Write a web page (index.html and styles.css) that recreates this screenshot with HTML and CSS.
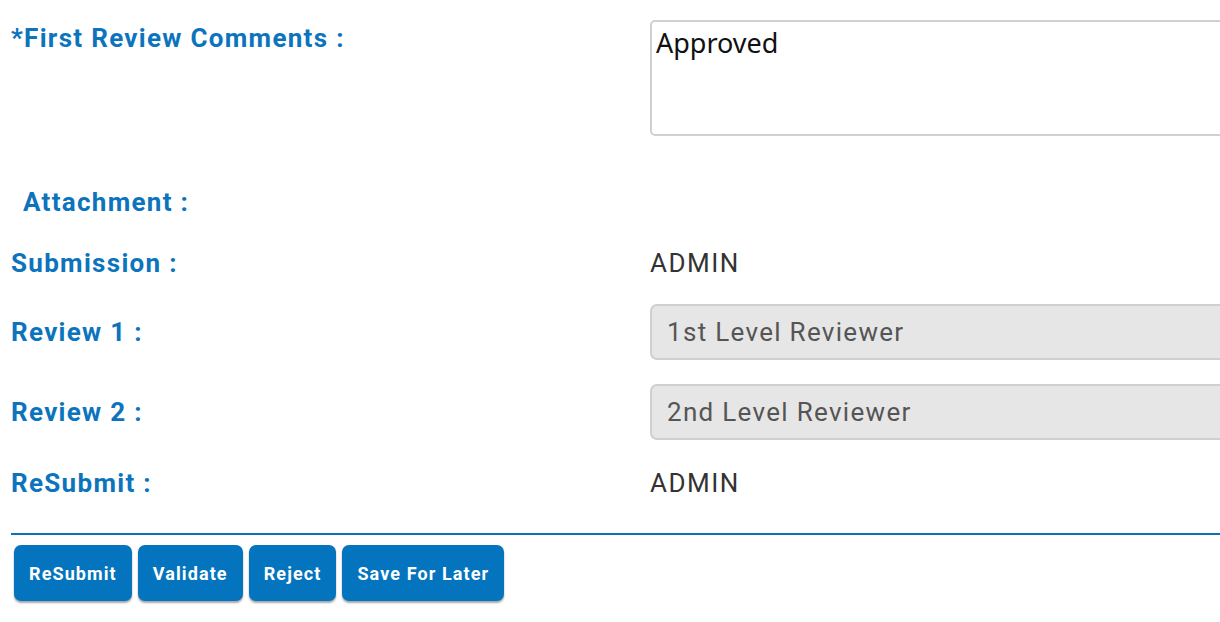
FILE: index.html
```html
<!DOCTYPE html>
<html>
<head>
<meta charset="utf-8">
<link rel="stylesheet" href="styles.css">
</head>
<body>
<div class="form">
  <div class="row row-comments">
    <div class="label label-top">*First Review Comments :</div>
    <div class="value"><div class="textarea">Approved</div></div>
  </div>
  <div class="row row-attach">
    <div class="label label-indent">Attachment :</div>
    <div class="value"></div>
  </div>
  <div class="row row-sub">
    <div class="label">Submission :</div>
    <div class="value"><span class="plain">ADMIN</span></div>
  </div>
  <div class="row row-rev1">
    <div class="label">Review 1 :</div>
    <div class="value"><div class="input">1st Level Reviewer</div></div>
  </div>
  <div class="row row-rev2">
    <div class="label">Review 2 :</div>
    <div class="value"><div class="input">2nd Level Reviewer</div></div>
  </div>
  <div class="row row-resub">
    <div class="label">ReSubmit :</div>
    <div class="value"><span class="plain">ADMIN</span></div>
  </div>
  <div class="divider"></div>
  <div class="actions">
    <button class="btn btn-resubmit">ReSubmit</button>
    <button class="btn btn-validate">Validate</button>
    <button class="btn btn-reject">Reject</button>
    <button class="btn btn-save">Save For Later</button>
  </div>
</div>
</body>
</html>
```
FILE: styles.css
```css
html, body {
  margin: 0;
  padding: 0;
  background: #ffffff;
  overflow: hidden;
}
body {
  width: 1220px;
  height: 622px;
  font-family: Roboto, "Liberation Sans", sans-serif;
}
.form {
  padding: 20px 0 0 11px;
}
.row {
  display: flex;
  align-items: center;
  height: 56px;
}
.label {
  width: 639px;
  flex: none;
  color: #0b74bd;
  font-weight: 700;
  font-size: 26px;
  letter-spacing: 1.3px;
  line-height: 30px;
}
.label-top {
  align-self: flex-start;
  padding-top: 3px;
}
.label-indent {
  padding-left: 12px;
}
.value {
  flex: 1;
  display: flex;
  align-items: center;
}
.row-comments {
  height: 116px;
  align-items: flex-start;
}
.row-attach { margin-top: 38px; }
.row-sub { margin-top: 5px; }
.row-rev1 { margin-top: 13px; height: 56px; }
.row-rev2 { margin-top: 24px; height: 56px; }
.row-resub { margin-top: 15px; }
.textarea {
  box-sizing: border-box;
  width: 700px;
  height: 116px;
  border: 2px solid #d0d0d0;
  border-radius: 5px;
  padding: 3px 4px;
  font-family: "Noto Sans", "Open Sans", sans-serif;
  font-size: 27px;
  line-height: 36px;
  color: #111;
}
.input {
  box-sizing: border-box;
  width: 700px;
  height: 56px;
  background: #e6e6e6;
  border: 2px solid #cfcfcf;
  border-radius: 7px;
  padding: 0 15px;
  display: flex;
  align-items: center;
  font-size: 26px;
  letter-spacing: 1.3px;
  color: #555;
}
.plain {
  font-size: 26px;
  letter-spacing: 1.5px;
  color: #333;
}
.divider {
  margin-top: 22px;
  height: 2px;
  background: #0a72b6;
}
.actions {
  display: flex;
  gap: 6px;
  margin-top: 10px;
  padding-left: 3px;
}
.btn {
  height: 56px;
  border: none;
  border-radius: 7px;
  background: #0374bd;
  color: #fff;
  font-family: Roboto, "Liberation Sans", sans-serif;
  font-weight: 700;
  font-size: 18px;
  letter-spacing: 1.1px;
  padding: 0 15px;
  box-shadow: 0 2px 2px rgba(0,0,0,0.35);
}
```
